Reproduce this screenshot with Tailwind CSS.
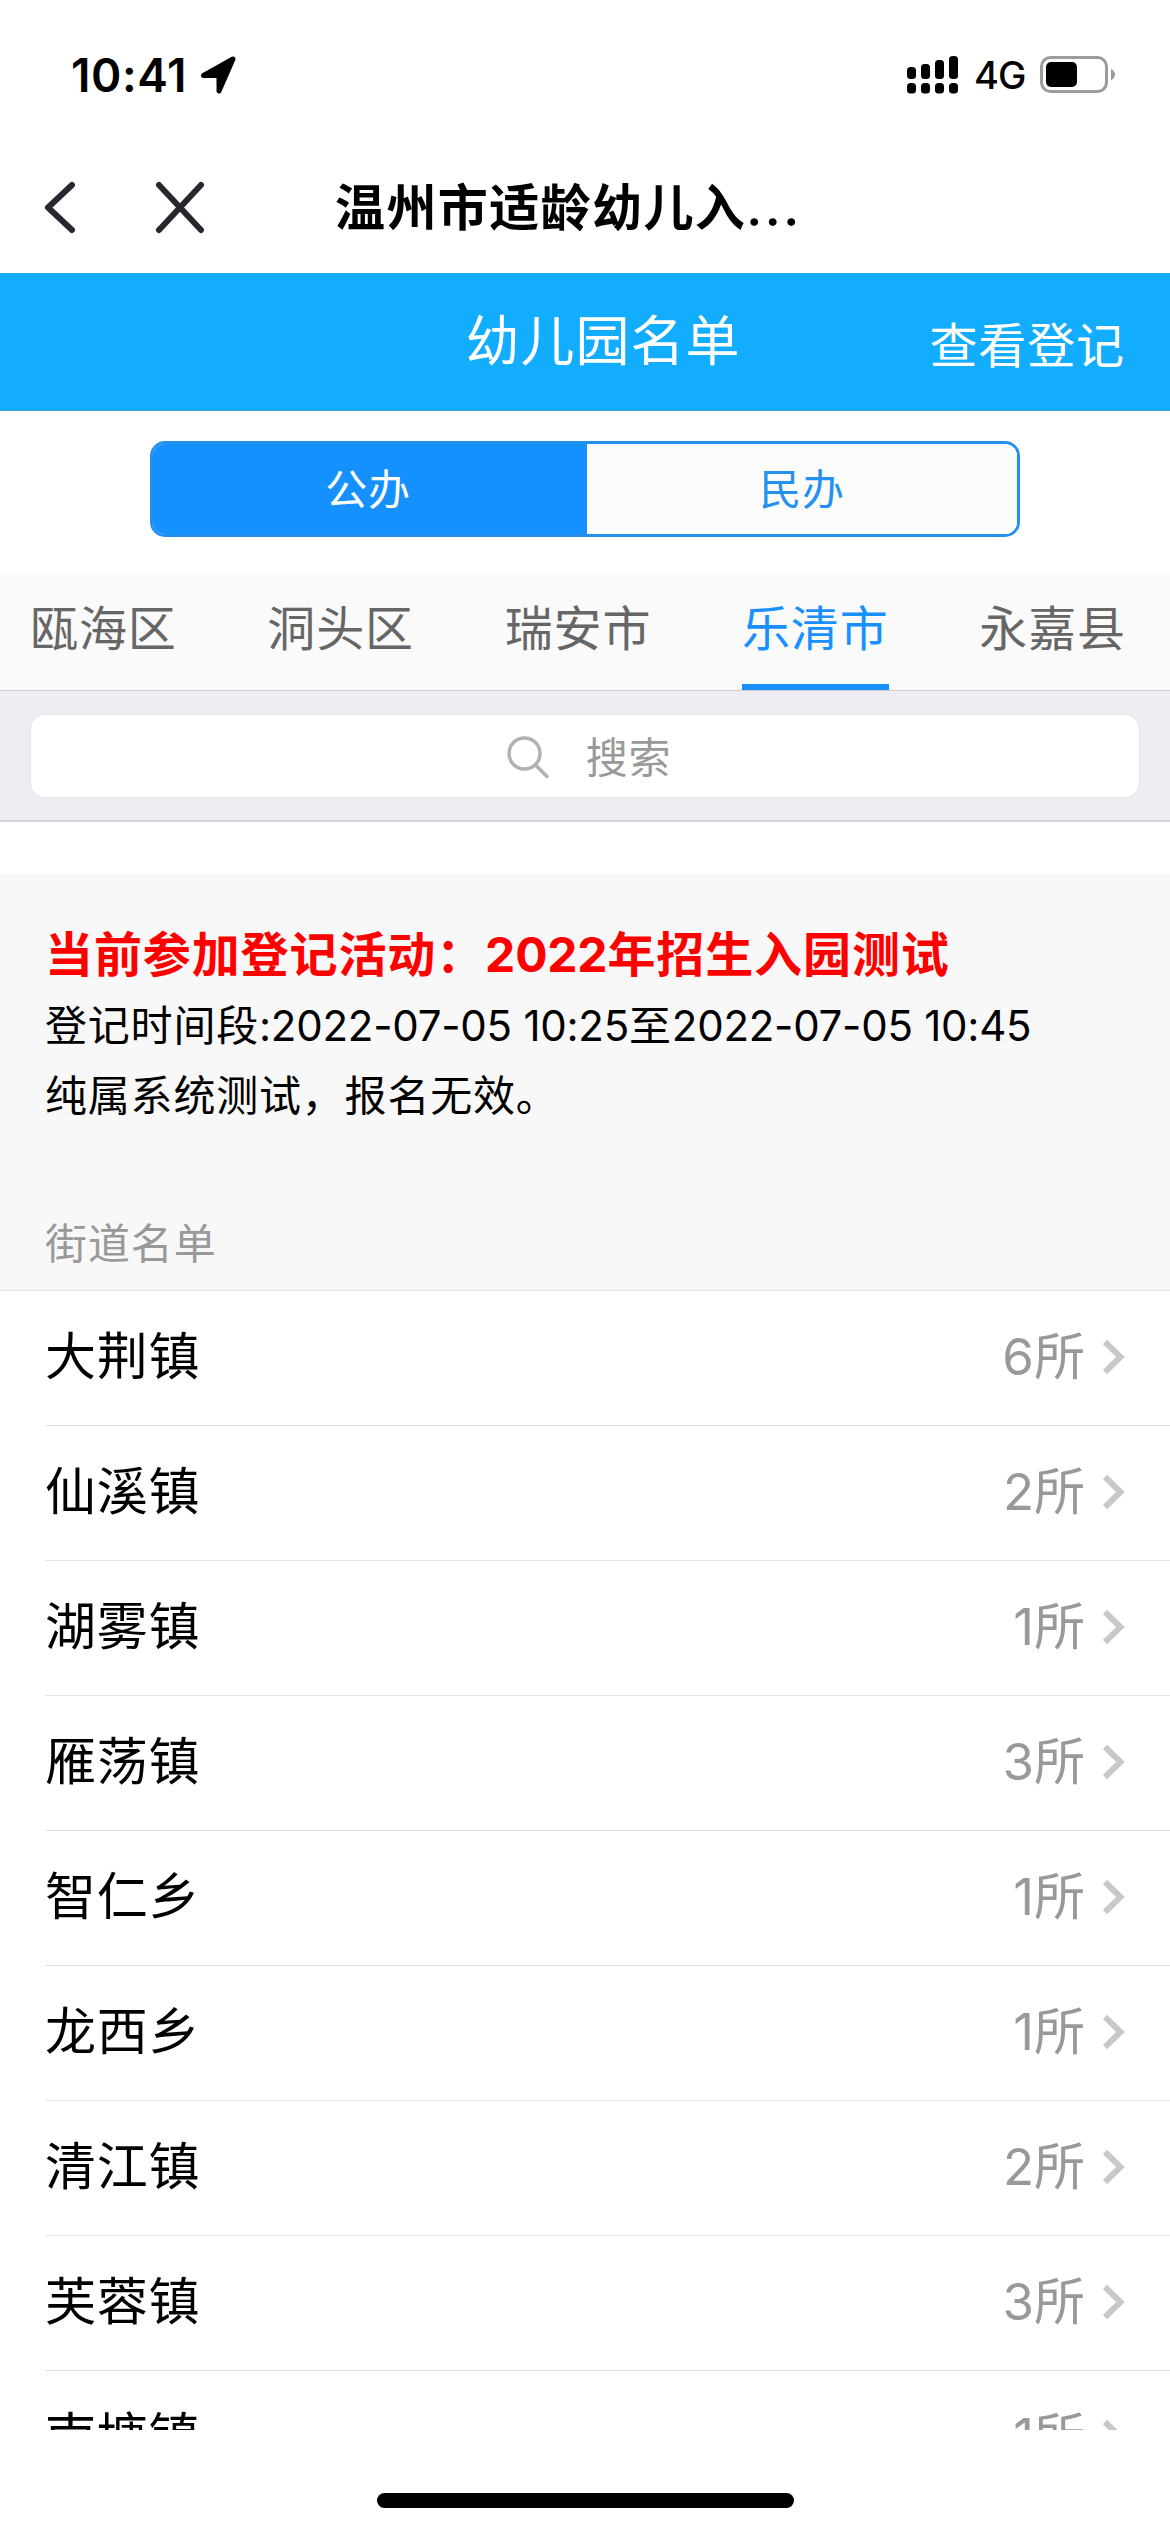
<!DOCTYPE html>
<html lang="zh-CN">
<head>
  <meta charset="UTF-8" />
  <meta name="viewport" content="width=device-width, initial-scale=1.0"/>
  <title>幼儿园名单</title>
  <script src="https://cdn.jsdelivr.net/npm/@tailwindcss/browser@4"></script>
  <style>
    body { font-family: 'Inter', 'Noto Sans CJK SC', sans-serif; }
  </style>
</head>
<body class="bg-white text-black">
  <div class="w-[1170px] h-[2532px] flex flex-col overflow-hidden whitespace-nowrap">

    <!-- Status bar -->
    <div class="h-[141px] shrink-0 flex items-start justify-between pl-[71px] pr-[54px] pt-[50px]">
      <div class="flex items-center h-[50px]">
        <span class="text-[46px] leading-[50px] font-semibold tracking-[0.6px] w-[129px]">10:41</span>
        <svg class="w-[36px] h-[38px]" viewBox="0 0 36 38"><path d="M33 3 L19 35 V19.5 H3.500 Z" fill="#000" stroke="#000" stroke-width="5" stroke-linejoin="round"/></svg>
      </div>
      <div class="flex items-center h-[50px]">
        <svg class="w-[52px] h-[38px]" viewBox="0 0 52 38" fill="#000">
          <rect x="0" y="11" width="9" height="12" rx="3.500"/>
          <rect x="14" y="8" width="9" height="15" rx="3.500"/>
          <rect x="28" y="4" width="9" height="19" rx="3.500"/>
          <rect x="42" y="0" width="9" height="23" rx="3.500"/>
          <rect x="0" y="27" width="9" height="10.500" rx="3.500"/>
          <rect x="14" y="27" width="9" height="10.500" rx="3.500"/>
          <rect x="28" y="27" width="9" height="10.500" rx="3.500"/>
          <rect x="42" y="27" width="9" height="10.500" rx="3.500"/>
        </svg>
        <span class="ml-[15px] w-[66px] text-[38px] leading-[50px] font-medium tracking-[-1px]">4G</span>
        <svg class="w-[76px] h-[38px]" viewBox="0 0 76 38">
          <rect x="1.500" y="1.500" width="65" height="34" rx="9" fill="none" stroke="#9c9c9c" stroke-width="3"/>
          <rect x="6" y="6" width="31" height="25" rx="5" fill="#000"/>
          <path d="M71 13 Q75 15 75 18.500 Q75 22 71 24 Z" fill="#9c9c9c"/>
        </svg>
      </div>
    </div>

    <!-- Browser title bar -->
    <div class="h-[132px] shrink-0 flex items-center pl-[44px]">
      <svg class="w-[34px] h-[54px]" viewBox="0 0 34 54" fill="none" stroke="#262830" stroke-width="6" stroke-linecap="round" stroke-linejoin="round"><path d="M28 5 L4 27.500 L28 50"/></svg>
      <svg class="ml-[77px] w-[50px] h-[54px]" viewBox="0 0 50 54" fill="none" stroke="#262830" stroke-width="6" stroke-linecap="round"><path d="M4 5 L46 50 M46 5 L4 50"/></svg>
      <h1 class="ml-[130px] pt-[2px] text-[50px] leading-[60px] font-bold tracking-[1.4px]">温州市适龄幼儿入<span class="font-semibold tracking-[2.6px]">...</span></h1>
    </div>

    <!-- Page header -->
    <header class="h-[138px] shrink-0 grid grid-cols-[1fr_auto_1fr] items-center bg-[#12adff] border-b border-[#3f9fd6] text-white">
      <div></div>
      <div class="pl-[36px] text-[54px] leading-[60px] tracking-[1px]">幼儿园名单</div>
      <div class="pt-[9px] pr-[45px] text-right text-[48px] leading-[60px] tracking-[0.9px]">查看登记</div>
    </header>

    <!-- Public / private switch -->
    <div class="h-[162px] shrink-0 pt-[30px] px-[150px]">
      <div class="h-[96px] flex rounded-[15px] border-[3px] border-[#2490f0] overflow-hidden text-[42px] leading-[92px] text-center tracking-[0.8px]">
        <div class="w-[434px] pr-[4px] bg-[#1491ff] text-white">公办</div>
        <div class="flex-1 bg-[#fcfcfc] text-[#2490f0]">民办</div>
      </div>
    </div>

    <!-- District tabs -->
    <nav class="h-[117px] shrink-0 flex justify-between bg-[#fafafa] pl-[30px] pr-[44px] text-[48px] leading-[111px] tracking-[0.9px] text-[#666]">
      <span>瓯海区</span>
      <span>洞头区</span>
      <span>瑞安市</span>
      <span class="text-[#1890ff] border-b-[6px] border-[#1890ff]">乐清市</span>
      <span>永嘉县</span>
    </nav>

    <!-- Search -->
    <div class="h-[132px] shrink-0 bg-[#eeedf3] border-t border-b-2 border-t-[#cfced5] border-b-[#d6d5dc] pt-[23px] px-[30px]">
      <div class="h-[84px] flex items-center justify-center rounded-[15px] border border-[#e6e6ea] bg-white pl-[8px] pt-[3px] text-[42px] tracking-[0.8px] text-[#999]">
        <svg class="mr-[36px] w-[43px] h-[43px]" viewBox="0 0 43 43" fill="none" stroke="#b2b2b2" stroke-width="3.500"><circle cx="17.500" cy="17.500" r="15.500"/><path d="M28 28.500 L41 41.500"/></svg>
        <span>搜索</span>
      </div>
    </div>

    <!-- Registration notice -->
    <section class="mt-[51px] h-[417px] shrink-0 bg-[#f8f8f8] px-[45px] pt-[46px]">
      <p class="text-[48px] leading-[72px] font-bold text-[#f00] tracking-[0.9px]">当前参加登记活动：<span class="tracking-[-0.2px]">2022</span>年招生入园测试</p>
      <p class="text-[42px] leading-[70px] tracking-[0.8px]">登记时间段<span class="tracking-[-0.25px]">:2022-07-05 10:25</span>至<span class="tracking-[-0.25px]">2022-07-05 10:45</span></p>
      <p class="text-[42px] leading-[70px] tracking-[0.8px]">纯属系统测试，报名无效。</p>
      <h2 class="mt-[78px] text-[42px] leading-[70px] tracking-[0.9px] text-[#999]">街道名单</h2>
    </section>

    <!-- Street list, cut off at the bottom of the scroll area -->
    <ul id="streetList" class="h-[1140px] shrink-0 overflow-hidden border-t border-[#e2e2e2] pl-[45px]"></ul>

    <!-- Home indicator -->
    <div class="mt-[63px] mx-auto h-[15px] w-[417px] shrink-0 rounded-full bg-black"></div>
  </div>

  <script>
    const streets = [
      ['大荆镇', 6],
      ['仙溪镇', 2],
      ['湖雾镇', 1],
      ['雁荡镇', 3],
      ['智仁乡', 1],
      ['龙西乡', 1],
      ['清江镇', 2],
      ['芙蓉镇', 3],
      ['南塘镇', 1]
    ];

    document.getElementById('streetList').innerHTML = streets.map(([name, count]) => `
      <li class="h-[135px] flex items-center border-b border-[#e2e2e2] pr-[45px] pb-[2px] text-[51px] leading-[60px] tracking-[0.8px]">
        <span class="flex-1">${name}</span>
        <span class="text-[#999] tracking-[0px]">${count}所</span>
        <svg class="ml-[18px] w-[22px] h-[36px]" viewBox="0 0 22 36" fill="none" stroke="#c7c7cc" stroke-width="6"><path d="M2 3 L17.500 18 L2 33"/></svg>
      </li>`).join('');
  </script>
</body>
</html>
